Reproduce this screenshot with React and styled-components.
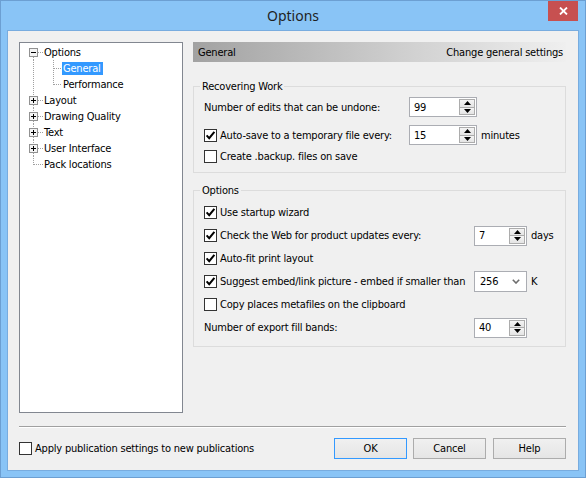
import React from "react";
import styled, { createGlobalStyle } from "styled-components";

const GlobalStyle = createGlobalStyle`
  html, body {
    margin: 0;
    padding: 0;
    background: #fff;
  }
  body {
    font-family: "DejaVu Sans Condensed", "DejaVu Sans", sans-serif;
    font-size: 11px;
    letter-spacing: -0.2px;
    color: #000;
  }
  * {
    box-sizing: border-box;
  }
`;

const Window = styled.div`
  width: 586px;
  height: 478px;
  border: 1px solid #6c9fd2;
  background: #89c4f6;
  padding: 0 6px 6px;
  display: flex;
  flex-direction: column;
`;

const TitleBar = styled.div`
  height: 29px;
  display: grid;
  grid-template-columns: 1fr auto 1fr;
  align-items: start;
`;

const Title = styled.div`
  grid-column: 2;
  font-family: "Noto Sans", "Open Sans", sans-serif;
  font-size: 14px;
  letter-spacing: 0;
  line-height: 30px;
  color: #1f1f1f;
`;

const CloseButton = styled.div`
  grid-column: 3;
  justify-self: end;
  width: 30px;
  height: 20px;
  margin-right: 1px;
  background: #c75050;
  display: flex;
  align-items: center;
  justify-content: center;
`;

const Client = styled.div`
  flex: 1;
  border: 1px solid #78acdf;
  background: #f0f0f0;
  padding: 11px 12px 11px 11px;
  display: flex;
  flex-direction: column;
`;

const Main = styled.div`
  display: flex;
  gap: 10px;
  height: 371px;
`;

const Tree = styled.div`
  width: 164px;
  border: 1px solid #828790;
  background: #fff;
  padding-top: 1px;
  display: flex;
  flex-direction: column;
`;

const TreeRowWrap = styled.div`
  display: flex;
  align-items: center;
  height: 16px;
`;

const TreeLabel = styled.span`
  height: 13px;
  line-height: 13px;
  padding: 0 2px 0 1px;
  white-space: nowrap;
  background: ${(p) => (p.$selected ? "#3399ff" : "transparent")};
  color: ${(p) => (p.$selected ? "#fff" : "#000")};
`;

const Panel = styled.div`
  flex: 1;
  display: flex;
  flex-direction: column;
`;

const Header = styled.div`
  height: 20px;
  display: flex;
  align-items: center;
  justify-content: space-between;
  padding: 0 3px 0 5px;
  background: linear-gradient(to right, #a2a2a2, #d2d2d2 60%, #efefef);
`;

const Group = styled.section`
  position: relative;
  border: 1px solid #dcdcdc;
  margin-top: ${(p) => p.$mt}px;
  padding: ${(p) => p.$pad};
  display: flex;
  flex-direction: column;
`;

const Legend = styled.span`
  position: absolute;
  top: -7px;
  left: 6px;
  padding: 0 2px;
  background: #f0f0f0;
  line-height: 13px;
`;

const Row = styled.div`
  display: grid;
  grid-template-columns: ${(p) => p.$label}px auto auto;
  justify-content: start;
  align-items: center;
  height: ${(p) => p.$h}px;
  margin-top: ${(p) => p.$mt || 0}px;
`;

const Unit = styled.span`
  margin-left: 4px;
`;

const CheckWrap = styled.label`
  display: flex;
  align-items: center;
  gap: 3px;
  white-space: nowrap;
`;

const Box = styled.span`
  width: 13px;
  height: 13px;
  border: 1px solid #333;
  background: #fff;
  display: flex;
  align-items: center;
  justify-content: center;
  flex: none;
`;

const SpinFrame = styled.div`
  display: flex;
  width: ${(p) => p.$w}px;
  height: 20px;
  border: 1px solid #abadb3;
  background: #fff;
`;

const SpinValue = styled.span`
  flex: 1;
  display: flex;
  align-items: center;
  padding-left: 4px;
`;

const SpinButtons = styled.div`
  width: 17px;
  padding: 1px 1px 1px 0;
  display: flex;
  flex-direction: column;
`;

const SpinBtn = styled.div`
  flex: 1;
  border: 1px solid #acacac;
  border-top-width: ${(p) => (p.$down ? 0 : 1)}px;
  background: linear-gradient(#f4f4f4, #e4e4e4);
  display: flex;
  align-items: center;
  justify-content: center;
`;

const Select = styled.div`
  display: flex;
  align-items: center;
  justify-content: space-between;
  width: ${(p) => p.$w}px;
  height: 21px;
  border: 1px solid #abadb3;
  background: #fff;
  padding: 0 6px 0 5px;
`;

const Separator = styled.div`
  margin-top: 13px;
  height: 2px;
  border-top: 1px solid #a0a0a0;
  border-bottom: 1px solid #fff;
`;

const Footer = styled.div`
  margin-top: 10px;
  height: 21px;
  display: flex;
  align-items: center;
  gap: 6px;
`;

const FooterCheck = styled(CheckWrap)`
  flex: 1;
`;

const Button = styled.div`
  width: 73px;
  height: 21px;
  display: flex;
  align-items: center;
  justify-content: center;
  border: 1px solid ${(p) => (p.$default ? "#3399ff" : "#acacac")};
  background: linear-gradient(#f0f0f0, #e5e5e5);
  margin-left: ${(p) => p.$ml || 0}px;
`;

const dots = {
  stroke: "#a0a0a0",
  strokeWidth: 1,
  strokeDasharray: "1 1",
  shapeRendering: "crispEdges",
};

function ExpandBox({ open }) {
  return (
    <g shapeRendering="crispEdges">
      <rect x="9.5" y="4.5" width="8" height="8" fill="#f4f4f4" stroke="#919191" />
      <line x1="11" y1="8.5" x2="16" y2="8.5" stroke="#000" />
      {!open && <line x1="13.5" y1="6" x2="13.5" y2="11" stroke="#000" />}
    </g>
  );
}

function TreeRow({ label, level, box, first, last, childLast, selected }) {
  const w = level === 0 ? 23 : 42;
  return (
    <TreeRowWrap>
      <svg width={w} height="16" style={{ flex: "none" }}>
        {level === 0 && box && (
          <>
            {!first && <line x1="13.5" y1="0" x2="13.5" y2="4" style={dots} />}
            {!last && <line x1="13.5" y1="13" x2="13.5" y2="16" style={dots} />}
            <line x1="18" y1="8.5" x2="23" y2="8.5" style={dots} />
            <ExpandBox open={box === "minus"} />
          </>
        )}
        {level === 0 && !box && (
          <>
            <line x1="13.5" y1="0" x2="13.5" y2="9" style={dots} />
            <line x1="14" y1="8.5" x2="23" y2="8.5" style={dots} />
          </>
        )}
        {level === 1 && (
          <>
            <line x1="13.5" y1="0" x2="13.5" y2="16" style={dots} />
            <line x1="33.5" y1="0" x2="33.5" y2={childLast ? 9 : 16} style={dots} />
            <line x1="34" y1="8.5" x2="42" y2="8.5" style={dots} />
          </>
        )}
      </svg>
      <TreeLabel $selected={selected}>{label}</TreeLabel>
    </TreeRowWrap>
  );
}

function Check({ checked, children }) {
  return (
    <CheckWrap>
      <Box>
        {checked && (
          <svg width="11" height="11" viewBox="0 0 11 11">
            <path d="M1.6 5.4 L4.2 8.2 L9.4 1.8" fill="none" stroke="#000" strokeWidth="2" />
          </svg>
        )}
      </Box>
      <span>{children}</span>
    </CheckWrap>
  );
}

function Spin({ value, width }) {
  return (
    <SpinFrame $w={width}>
      <SpinValue>{value}</SpinValue>
      <SpinButtons>
        <SpinBtn>
          <svg width="7" height="4">
            <path d="M0 4 L3.5 0 L7 4 Z" fill="#000" />
          </svg>
        </SpinBtn>
        <SpinBtn $down>
          <svg width="7" height="4">
            <path d="M0 0 L3.5 4 L7 0 Z" fill="#000" />
          </svg>
        </SpinBtn>
      </SpinButtons>
    </SpinFrame>
  );
}

const treeItems = [
  { label: "Options", level: 0, box: "minus", first: true },
  { label: "General", level: 1, selected: true },
  { label: "Performance", level: 1, childLast: true },
  { label: "Layout", level: 0, box: "plus" },
  { label: "Drawing Quality", level: 0, box: "plus" },
  { label: "Text", level: 0, box: "plus" },
  { label: "User Interface", level: 0, box: "plus" },
  { label: "Pack locations", level: 0, last: true },
];

export default function App() {
  return (
    <>
      <GlobalStyle />
      <Window>
        <TitleBar>
          <Title>Options</Title>
          <CloseButton>
            <svg width="9" height="8" viewBox="0 0 9 8">
              <path d="M1 0.5 L8 7.5 M8 0.5 L1 7.5" stroke="#fff" strokeWidth="1.8" />
            </svg>
          </CloseButton>
        </TitleBar>
        <Client>
          <Main>
            <Tree>
              {treeItems.map((item) => (
                <TreeRow key={item.label} {...item} />
              ))}
            </Tree>
            <Panel>
              <Header>
                <span>General</span>
                <span>Change general settings</span>
              </Header>

              <Group $mt={24} $pad="10px 10px 7px 10px">
                <Legend>Recovering Work</Legend>
                <Row $label={205} $h={20}>
                  <span>Number of edits that can be undone:</span>
                  <Spin value="99" width={68} />
                </Row>
                <Row $label={205} $h={20} $mt={8}>
                  <Check checked>Auto-save to a temporary file every:</Check>
                  <Spin value="15" width={68} />
                  <Unit>minutes</Unit>
                </Row>
                <Row $label={205} $h={17} $mt={3}>
                  <Check>Create .backup. files on save</Check>
                </Row>
              </Group>

              <Group $mt={17} $pad="10px 10px 7px 10px">
                <Legend>Options</Legend>
                <Row $label={270} $h={23}>
                  <Check checked>Use startup wizard</Check>
                </Row>
                <Row $label={270} $h={23}>
                  <Check checked>Check the Web for product updates every:</Check>
                  <Spin value="7" width={53} />
                  <Unit>days</Unit>
                </Row>
                <Row $label={270} $h={23}>
                  <Check checked>Auto-fit print layout</Check>
                </Row>
                <Row $label={270} $h={23}>
                  <Check checked>Suggest embed/link picture - embed if smaller than</Check>
                  <Select $w={53}>
                    <span>256</span>
                    <svg width="8" height="5" viewBox="0 0 8 5">
                      <path d="M0.8 0.8 L4 4 L7.2 0.8" fill="none" stroke="#6d6d6d" strokeWidth="1.6" />
                    </svg>
                  </Select>
                  <Unit>K</Unit>
                </Row>
                <Row $label={270} $h={23}>
                  <Check>Copy places metafiles on the clipboard</Check>
                </Row>
                <Row $label={270} $h={23}>
                  <span>Number of export fill bands:</span>
                  <Spin value="40" width={53} />
                </Row>
              </Group>
            </Panel>
          </Main>
          <Separator />
          <Footer>
            <FooterCheck>
              <Box />
              <span>Apply publication settings to new publications</span>
            </FooterCheck>
            <Button $default>OK</Button>
            <Button>Cancel</Button>
            <Button $ml={1}>Help</Button>
          </Footer>
        </Client>
      </Window>
    </>
  );
}
